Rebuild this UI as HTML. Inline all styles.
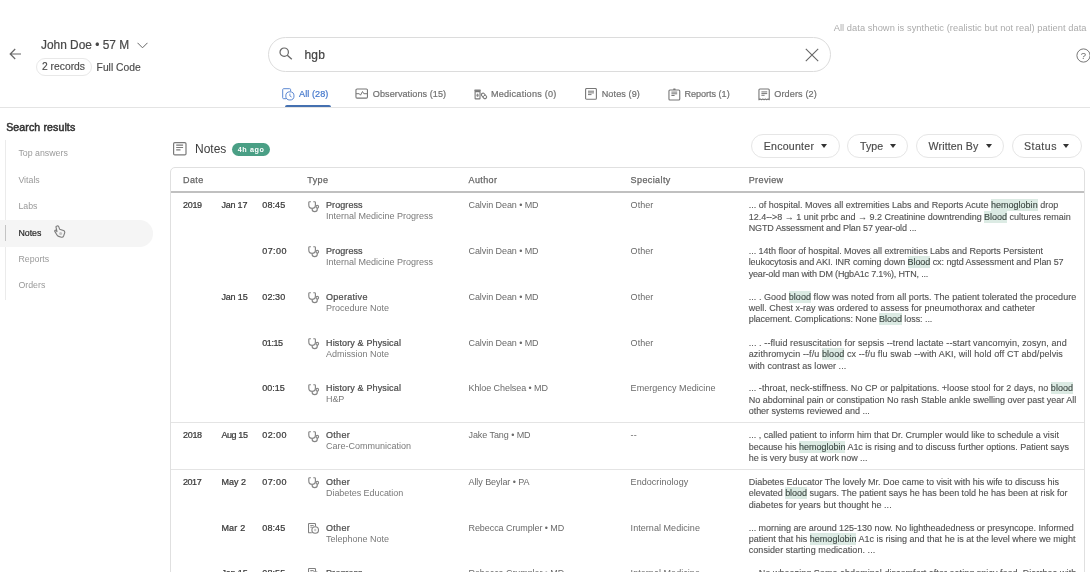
<!DOCTYPE html>
<html>
<head>
<meta charset="utf-8">
<title>Search results</title>
<style>
*{box-sizing:border-box;margin:0;padding:0}
html,body{width:1090px;height:572px;overflow:hidden;background:#fff}
body{font-family:"Liberation Sans",sans-serif;color:#444;position:relative;font-size:9px;will-change:transform}
.abs{position:absolute;white-space:nowrap}
svg{display:block}
/* header */
#pname{left:41px;top:37px;font-size:11.9px;line-height:16px;color:#484848;-webkit-text-stroke:.2px currentColor}
#rec{left:35.5px;top:58.3px;width:56px;height:18px;border:1px solid #e8e8e8;border-radius:9px;-webkit-text-stroke:.15px currentColor;font-size:10.3px;line-height:16.6px;text-align:center;color:#4a4a4a}
#fc{left:96.6px;top:59.6px;font-size:10.3px;line-height:16px;color:#4a4a4a;-webkit-text-stroke:.15px currentColor}
#search{left:268px;top:37px;width:563px;height:35px;border:1px solid #dcdcdc;border-radius:18px}
#q{left:304.5px;top:45.7px;font-size:12px;line-height:18px;color:#444;letter-spacing:.2px;-webkit-text-stroke:.2px currentColor}
#disc{letter-spacing:.05px;left:833.7px;top:22px;font-size:9.3px;line-height:12px;color:#ababab}
.tab{top:87.6px;height:12px;line-height:12px;font-size:9.1px;color:#707070;-webkit-text-stroke:.2px currentColor}
#hdiv{left:0;top:107px;width:1090px;height:1px;background:#e4e4e4}
#uline{left:284.7px;top:104.6px;width:46.2px;height:2.4px;background:#4470b0;border-radius:2px 2px 0 0}
/* sidebar */
#sr{letter-spacing:.1px;left:6.2px;top:120.3px;font-size:10.6px;line-height:14px;color:#333;-webkit-text-stroke:.5px currentColor}
#vline{left:5.1px;top:140px;width:1px;height:160px;background:#ebebeb}
#pill{left:0;top:220px;width:152.5px;height:26.5px;background:#f5f5f5;border-radius:0 13.25px 13.25px 0}
#vsel{left:5.1px;top:225px;width:1px;height:16px;background:#c4c4c4}
.sb{left:18.4px;font-size:8.8px;line-height:12px;color:#9a9a9a}
/* notes heading */
#nh{left:195px;top:140.5px;font-size:12px;line-height:16px;color:#3c3c3c}
#badge{left:231.6px;top:142.6px;width:38.5px;height:13px;border-radius:6.5px;background:#4a9f85;color:#fff;font-size:7.2px;line-height:13px;font-weight:bold;text-align:center;letter-spacing:.62px;padding-left:.5px}
.fb{top:134px;height:23.6px;border:1px solid #e6e6e6;border-radius:12px;font-size:10.6px;line-height:23.4px;color:#4a4a4a;-webkit-text-stroke:.15px currentColor}
.fb i{position:absolute;top:9.2px;width:0;height:0;border-left:3.5px solid transparent;border-right:3.5px solid transparent;border-top:4.2px solid #333}
/* table */
#tbl{left:170px;top:167.2px;width:914.6px;height:420px;border:1.2px solid #e0e0e0;border-radius:5px}
#thl{left:171px;top:191.1px;width:913px;height:1.6px;background:#c0c0c0}
.th{top:174px;font-size:9px;line-height:12px;color:#666;-webkit-text-stroke:.25px currentColor;letter-spacing:.4px}
.row{position:absolute;left:171px;width:913px;height:45.8px}
.row>div{position:absolute;white-space:nowrap;line-height:12px;font-size:9px}
.gb{position:absolute;left:171px;width:913px;height:1.3px;background:#e4e4e4}
.c1{left:12px;top:6px;color:#3a3a3a}
.c2{left:50.4px;top:6px;color:#3a3a3a}
.c3{left:91.3px;top:6px;color:#3a3a3a}
.row>.ci{position:absolute;left:136.7px;top:7.6px}
.m{-webkit-text-stroke:.24px currentColor}
.l{white-space:nowrap;height:11.3px}
.c4{left:155px;top:6px;color:#4e4e4e}
.c4b{left:155px;top:17.4px;color:#7a7a7a}
.c5{left:297.5px;top:6px;color:#6a6a6a}
.c6{left:459.6px;top:6px;color:#6a6a6a}
.row>.pv{left:577.7px;top:7.3px;color:#525252;line-height:11.3px;-webkit-text-stroke:.12px currentColor}
.pv b{font-weight:normal;background:#dcebe4;color:#3c4642;padding:1px 0}

#r1 .c3,#r3 .c3,#r8 .c3,#r9 .c3{letter-spacing:.1px}
#r2 .c3,#r6 .c3,#r7 .c3{letter-spacing:.4px}
#r4 .c3{letter-spacing:-.46px}
#r1 .c2{letter-spacing:-.2px}#r3 .c2,#r9 .c2{letter-spacing:-.15px}#r6 .c2{letter-spacing:-.4px}#r8 .c2{letter-spacing:.2px}
#r1 .c1,#r6 .c1{letter-spacing:-.3px}#r7 .c1{letter-spacing:-.45px}

.c5{letter-spacing:-.07px}.c6{letter-spacing:.05px}
#r1 .c4,#r2 .c4,#r9 .c4{letter-spacing:.08px}#r3 .c4{letter-spacing:.3px}#r4 .c4,#r5 .c4{letter-spacing:.14px}#r6 .c4,#r7 .c4,#r8 .c4{letter-spacing:.3px}
#r5 .c4b{letter-spacing:-.1px}#r7 .c4b{letter-spacing:-.05px}
</style>
</head>
<body>


<!-- header -->
<svg class="abs" style="left:8.5px;top:48px" width="13" height="12" viewBox="0 0 13 12"><path d="M12 6H1.6M6.2 1L1.2 6l5 5" fill="none" stroke="#666" stroke-width="1.2"/></svg>
<div class="abs" id="pname">John Doe • 57 M</div>
<svg class="abs" style="left:137px;top:41.5px" width="11" height="7" viewBox="0 0 11 7"><path d="M.5.8L5.5 5.8 10.5.8" fill="none" stroke="#666" stroke-width="1"/></svg>
<div class="abs" id="rec">2 records</div>
<div class="abs" id="fc">Full Code</div>

<div class="abs" id="search"></div>
<svg class="abs" style="left:279px;top:47.200px" width="14" height="13" viewBox="0 0 14 13"><circle cx="5.2" cy="5.2" r="4.2" fill="none" stroke="#666" stroke-width="1.2"/><path d="M8.3 8.3L12.8 12.3" stroke="#666" stroke-width="1.3"/></svg>
<div class="abs" id="q">hgb</div>
<svg class="abs" style="left:804.800px;top:47.800px" width="14" height="14" viewBox="0 0 14 14"><path d="M.8.8L13.2 13.2M13.2.8L.8 13.2" stroke="#666" stroke-width="1.1"/></svg>
<div class="abs" id="disc">All data shown is synthetic (realistic but not real) patient data</div>
<svg class="abs" style="left:1076px;top:47.600px" width="15" height="15" viewBox="0 0 15 15"><circle cx="7.500" cy="7.500" r="6.600" fill="none" stroke="#777" stroke-width="1"/><text x="7.500" y="10.900" font-size="9.500" font-family="Liberation Sans" text-anchor="middle" fill="#666">?</text></svg>

<!-- tabs -->
<svg class="abs" style="left:282px;top:88px" width="13" height="13" viewBox="0 0 13 13"><path d="M4 10.700H1.600a.9.9 0 0 1-.9-.9V1.600a.9.9 0 0 1 .9-.9h6.100a.9.9 0 0 1 .9.9V3.300" fill="none" stroke="#5c88d2" stroke-width="1"/><circle cx="7.900" cy="7.900" r="4.100" fill="none" stroke="#5c88d2" stroke-width="1"/><path d="M7.900 5.600V8l1.700 1" fill="none" stroke="#5c88d2" stroke-width=".9"/></svg>
<svg class="abs" style="left:355.300px;top:88.400px" width="14" height="11" viewBox="0 0 14 11"><rect x=".95" y="1" width="11.500" height="9.100" rx="1.100" fill="none" stroke="#777" stroke-width="1.100"/><path d="M1 5.700h3.300l1.200 1.500 2-3.700 1.300 2.200h3.600" fill="none" stroke="#777" stroke-width="1" stroke-linejoin="round"/></svg>
<svg class="abs" style="left:473.800px;top:88.500px" width="14" height="11" viewBox="0 0 14 11"><rect x=".3" y=".5" width="6.500" height="2.100" rx=".6" fill="#808080"/><rect x="1.100" y="2.600" width="4.900" height="7.300" rx=".5" fill="none" stroke="#777" stroke-width="1.100"/><ellipse cx="3.550" cy="6.200" rx="1.100" ry="1.800" fill="#8a8a8a"/><g transform="rotate(50 10 6.900)"><rect x="6.900" y="5.300" width="6.200" height="3.200" rx="1.600" fill="none" stroke="#777" stroke-width="1.050"/><path d="M10 5.300v3.200" stroke="#777" stroke-width=".9"/></g></svg>
<svg class="abs" style="left:585px;top:88px" width="12" height="12" viewBox="0 0 12 12"><rect x=".6" y=".5" width="10.800" height="10.800" rx="1.100" fill="none" stroke="#777" stroke-width="1.100"/><path d="M3 3.200h6M3 4.900h6M3 6.600h3.500" stroke="#777" stroke-width="1"/></svg>
<svg class="abs" style="left:667.500px;top:87.500px" width="13" height="13" viewBox="0 0 13 13"><rect x=".95" y="1.950" width="10.800" height="10.100" rx="1" fill="none" stroke="#777" stroke-width="1.100"/><rect x="5.100" y=".4" width="2.600" height="1.600" rx=".7" fill="#777"/><path d="M3.400 4.100h5.800M3.400 5.800h5.800M3.400 7.500h3.200" stroke="#777" stroke-width="1"/></svg>
<svg class="abs" style="left:757.500px;top:87.500px" width="12" height="13" viewBox="0 0 12 13"><path d="M.95 11.800V2a.95.95 0 0 1 .95-.95h8.400a.95.95 0 0 1 .95.95v9.800l-1.290-.7-1.290.7-1.290-.7-1.290.7-1.290-.7-1.290.7-1.290-.7z" fill="none" stroke="#777" stroke-width="1.100" stroke-linejoin="round"/><path d="M3.400 3.900h5.800M3.400 5.600h5.800M3.400 7.300h3.200" stroke="#777" stroke-width="1"/></svg>
<div class="abs tab" style="left:299px;color:#4377cc;letter-spacing:0.075px" id="t1">All (28)</div>
<div class="abs tab" style="left:372.8px;letter-spacing:0.065px" id="t2">Observations (15)</div>
<div class="abs tab" style="left:491px;letter-spacing:0.22px" id="t3">Medications (0)</div>
<div class="abs tab" style="left:601.7px;letter-spacing:0.1px" id="t4">Notes (9)</div>
<div class="abs tab" style="left:684.4px;letter-spacing:-0.02px" id="t5">Reports (1)</div>
<div class="abs tab" style="left:774.3px;letter-spacing:0.11px" id="t6">Orders (2)</div>
<div class="abs" id="hdiv"></div>
<div class="abs" id="uline"></div>

<!-- sidebar -->
<div class="abs" id="sr">Search results</div>
<div class="abs" id="vline"></div>
<div class="abs" id="pill"></div>
<div class="abs" id="vsel"></div>
<div class="abs sb" style="top:147px">Top answers</div>
<div class="abs sb" style="top:173.5px">Vitals</div>
<div class="abs sb" style="top:200px">Labs</div>
<div class="abs sb" style="top:226.6px;color:#2a2a2a;-webkit-text-stroke:.2px currentColor">Notes</div>
<div class="abs sb" style="top:253.3px">Reports</div>
<div class="abs sb" style="top:279.3px">Orders</div>

<svg class="abs" style="left:54px;top:224.500px" width="12" height="13" viewBox="0 0 12 13"><path d="M3 1C3.800.6 4.600 1 4.800 1.800L5.600 4.200 9.500 5.600C10.600 6 11 7 10.600 8.200L9.600 11C9.200 12 8.400 12.400 7.400 12.200L4.600 11.400C3.800 11.200 3.200 10.600 2.800 9.800L.8 6.400C.4 5.600 1.200 4.800 2 5.400L3 6.600 2 2.200C1.800 1.600 2.400 1.200 3 1Z" fill="#f3f3f3" stroke="#7c7c7c" stroke-width="1.100" stroke-linejoin="round"/><circle cx="6.600" cy="8.400" r="1.500" fill="#c2c2c2"/></svg>

<!-- notes heading -->
<svg class="abs" style="left:173px;top:141.500px" width="14" height="14" viewBox="0 0 14 14"><rect x=".6" y=".6" width="12.400" height="12.300" rx="1.200" fill="none" stroke="#7a7a7a" stroke-width="1.200"/><path d="M3.200 3.100h6.900M3.200 5.500h6.900M3.200 7.900h4.300" stroke="#7a7a7a" stroke-width="1.100"/></svg>
<div class="abs" id="nh">Notes</div>
<div class="abs" id="badge">4h ago</div>

<div class="abs fb" style="left:751.2px;width:88.7px;padding-left:11.6px;letter-spacing:.23px">Encounter<i style="left:68.6px"></i></div>
<div class="abs fb" style="left:847px;width:61.4px;padding-left:12px;letter-spacing:.05px">Type<i style="left:42.1px"></i></div>
<div class="abs fb" style="left:915.8px;width:88.7px;padding-left:11.8px;letter-spacing:.12px">Written By<i style="left:69.4px"></i></div>
<div class="abs fb" style="left:1012px;width:69.7px;padding-left:10.9px;letter-spacing:.5px">Status<i style="left:49.9px"></i></div>

<!-- table -->
<div class="abs" id="tbl"></div>
<div class="abs th" style="left:183px">Date</div>
<div class="abs th" style="left:307.3px">Type</div>
<div class="abs th" style="left:468.5px">Author</div>
<div class="abs th" style="left:630.6px">Specialty</div>
<div class="abs th" style="left:748.7px">Preview</div>
<div class="abs" id="thl"></div>

<div class="row" id="r1" style="top:193.0px">
<div class="c1 m">2019</div><div class="c2 m">Jan 17</div><div class="c3 m">08:45</div>
<svg class="ci" width="12" height="12" viewBox="0 0 12 12"><path d="M2.900.7H1.600a.8.8 0 0 0-.8.8v2.400a3.300 3.300 0 0 0 6.600 0V1.500a.8.8 0 0 0-.8-.8H5.300M4.100 7.200v.9a2.600 2.600 0 0 0 5.200 0V7" fill="none" stroke="#858585" stroke-width="1.150"/><circle cx="9.300" cy="5.700" r="1.300" fill="none" stroke="#858585" stroke-width="1.100"/></svg><div class="c4 m">Progress</div><div class="c4b">Internal Medicine Progress</div>
<div class="c5">Calvin Dean • MD</div><div class="c6">Other</div>
<div class="pv"><div class="l" style="letter-spacing:0.018px">... of hospital. Moves all extremities Labs and Reports Acute <b>hemoglobin</b> drop</div><div class="l" style="letter-spacing:-0.017px">12.4--&gt;8 → 1 unit prbc and → 9.2 Creatinine downtrending <b>Blood</b> cultures remain</div><div class="l" style="letter-spacing:-0.107px">NGTD Assessment and Plan 57 year-old ...</div></div>
</div>
<div class="row" id="r2" style="top:238.75px">
<div class="c3 m">07:00</div>
<svg class="ci" width="12" height="12" viewBox="0 0 12 12"><path d="M2.900.7H1.600a.8.8 0 0 0-.8.8v2.400a3.300 3.300 0 0 0 6.600 0V1.500a.8.8 0 0 0-.8-.8H5.300M4.100 7.200v.9a2.600 2.600 0 0 0 5.200 0V7" fill="none" stroke="#858585" stroke-width="1.150"/><circle cx="9.300" cy="5.700" r="1.300" fill="none" stroke="#858585" stroke-width="1.100"/></svg><div class="c4 m">Progress</div><div class="c4b">Internal Medicine Progress</div>
<div class="c5">Calvin Dean • MD</div><div class="c6">Other</div>
<div class="pv"><div class="l" style="letter-spacing:-0.023px">... 14th floor of hospital. Moves all extremities Labs and Reports Persistent</div><div class="l" style="letter-spacing:-0.071px">leukocytosis and AKI. INR coming down <b>Blood</b> cx: ngtd Assessment and Plan 57</div><div class="l" style="letter-spacing:-0.173px">year-old man with DM (HgbA1c 7.1%), HTN, ...</div></div>
</div>
<div class="row" id="r3" style="top:284.5px">
<div class="c2 m">Jan 15</div><div class="c3 m">02:30</div>
<svg class="ci" width="12" height="12" viewBox="0 0 12 12"><path d="M2.900.7H1.600a.8.8 0 0 0-.8.8v2.400a3.300 3.300 0 0 0 6.600 0V1.500a.8.8 0 0 0-.8-.8H5.300M4.100 7.200v.9a2.600 2.600 0 0 0 5.200 0V7" fill="none" stroke="#858585" stroke-width="1.150"/><circle cx="9.300" cy="5.700" r="1.300" fill="none" stroke="#858585" stroke-width="1.100"/></svg><div class="c4 m">Operative</div><div class="c4b">Procedure Note</div>
<div class="c5">Calvin Dean • MD</div><div class="c6">Other</div>
<div class="pv"><div class="l" style="letter-spacing:0.049px">... . Good <b>blood</b> flow was noted from all ports. The patient tolerated the procedure</div><div class="l" style="letter-spacing:0.026px">well. Chest x-ray was ordered to assess for pneumothorax and catheter</div><div class="l" style="letter-spacing:-0.054px">placement. Complications: None <b>Blood</b> loss: ...</div></div>
</div>
<div class="row" id="r4" style="top:330.8px">
<div class="c3 m">01:15</div>
<svg class="ci" width="12" height="12" viewBox="0 0 12 12"><path d="M2.900.7H1.600a.8.8 0 0 0-.8.8v2.400a3.300 3.300 0 0 0 6.600 0V1.500a.8.8 0 0 0-.8-.8H5.300M4.100 7.200v.9a2.600 2.600 0 0 0 5.200 0V7" fill="none" stroke="#858585" stroke-width="1.150"/><circle cx="9.300" cy="5.700" r="1.300" fill="none" stroke="#858585" stroke-width="1.100"/></svg><div class="c4 m">History &amp; Physical</div><div class="c4b">Admission Note</div>
<div class="c5">Calvin Dean • MD</div><div class="c6">Other</div>
<div class="pv"><div class="l" style="letter-spacing:0.101px">... . --fluid resuscitation for sepsis --trend lactate --start vancomyin, zosyn, and</div><div class="l" style="letter-spacing:0.091px">azithromycin --f/u <b>blood</b> cx --f/u flu swab --with AKI, will hold off CT abd/pelvis</div><div class="l" style="letter-spacing:0.038px">with contrast as lower ...</div></div>
</div>
<div class="row" id="r5" style="top:376.0px">
<div class="c3 m">00:15</div>
<svg class="ci" width="12" height="12" viewBox="0 0 12 12"><path d="M2.900.7H1.600a.8.8 0 0 0-.8.8v2.400a3.300 3.300 0 0 0 6.600 0V1.500a.8.8 0 0 0-.8-.8H5.300M4.100 7.200v.9a2.600 2.600 0 0 0 5.200 0V7" fill="none" stroke="#858585" stroke-width="1.150"/><circle cx="9.300" cy="5.700" r="1.300" fill="none" stroke="#858585" stroke-width="1.100"/></svg><div class="c4 m">History &amp; Physical</div><div class="c4b">H&amp;P</div>
<div class="c5">Khloe Chelsea • MD</div><div class="c6">Emergency Medicine</div>
<div class="pv"><div class="l" style="letter-spacing:0.045px">... -throat, neck-stiffness. No CP or palpitations. +loose stool for 2 days, no <b>blood</b></div><div class="l" style="letter-spacing:-0.007px">No abdominal pain or constipation No rash Stable ankle swelling over past year All</div><div class="l" style="letter-spacing:-0.030px">other systems reviewed and ...</div></div>
</div>
<div class="row" id="r6" style="top:423.0px">
<div class="c1 m">2018</div><div class="c2 m">Aug 15</div><div class="c3 m">02:00</div>
<svg class="ci" width="12" height="12" viewBox="0 0 12 12"><path d="M2.900.7H1.600a.8.8 0 0 0-.8.8v2.400a3.300 3.300 0 0 0 6.600 0V1.500a.8.8 0 0 0-.8-.8H5.300M4.100 7.200v.9a2.600 2.600 0 0 0 5.200 0V7" fill="none" stroke="#858585" stroke-width="1.150"/><circle cx="9.300" cy="5.700" r="1.300" fill="none" stroke="#858585" stroke-width="1.100"/></svg><div class="c4 m">Other</div><div class="c4b">Care-Communication</div>
<div class="c5">Jake Tang • MD</div><div class="c6">--</div>
<div class="pv"><div class="l" style="letter-spacing:0.007px">... , called patient to inform him that Dr. Crumpler would like to schedule a visit</div><div class="l" style="letter-spacing:-0.017px">because his <b>hemoglobin</b> A1c is rising and to discuss further options. Patient says</div><div class="l" style="letter-spacing:-0.058px">he is very busy at work now ...</div></div>
</div>
<div class="row" id="r7" style="top:469.75px">
<div class="c1 m">2017</div><div class="c2 m">May 2</div><div class="c3 m">07:00</div>
<svg class="ci" width="12" height="12" viewBox="0 0 12 12"><path d="M2.900.7H1.600a.8.8 0 0 0-.8.8v2.400a3.300 3.300 0 0 0 6.600 0V1.500a.8.8 0 0 0-.8-.8H5.300M4.100 7.200v.9a2.600 2.600 0 0 0 5.200 0V7" fill="none" stroke="#858585" stroke-width="1.150"/><circle cx="9.300" cy="5.700" r="1.300" fill="none" stroke="#858585" stroke-width="1.100"/></svg><div class="c4 m">Other</div><div class="c4b">Diabetes Education</div>
<div class="c5">Ally Beylar • PA</div><div class="c6">Endocrinology</div>
<div class="pv"><div class="l" style="letter-spacing:-0.016px">Diabetes Educator The lovely Mr. Doe came to visit with his wife to discuss his</div><div class="l" style="letter-spacing:-0.011px">elevated <b>blood</b> sugars. The patient says he has been told he has been at risk for</div><div class="l" style="letter-spacing:0.038px">diabetes for years but thought he ...</div></div>
</div>
<div class="row" id="r8" style="top:515.5px">
<div class="c2 m">Mar 2</div><div class="c3 m">08:45</div>
<svg class="ci" width="12" height="12" viewBox="0 0 12 12"><g transform="translate(-.5 -.9)"><path d="M4.300 10.700H1.800a.8.8 0 0 1-.8-.8V2.200a.8.8 0 0 1 .8-.8h5.400a.8.8 0 0 1 .8.8V4.300" fill="none" stroke="#808080" stroke-width="1.100"/><path d="M2.800 3.400h3.400M2.800 5.100h1.800" stroke="#808080" stroke-width=".9"/><circle cx="7.700" cy="7.900" r="3.300" fill="#fff" stroke="#808080" stroke-width="1.100"/><circle cx="7.700" cy="7.900" r="1.200" fill="#c8c8c8"/></g></svg><div class="c4 m">Other</div><div class="c4b">Telephone Note</div>
<div class="c5">Rebecca Crumpler • MD</div><div class="c6">Internal Medicine</div>
<div class="pv"><div class="l" style="letter-spacing:-0.027px">... morning are around 125-130 now. No lightheadedness or presyncope. Informed</div><div class="l" style="letter-spacing:0.006px">patient that his <b>hemoglobin</b> A1c is rising and that he is at the level where we might</div><div class="l" style="letter-spacing:0.061px">consider starting medication. ...</div></div>
</div>
<div class="row" id="r9" style="top:560.8px">
<div class="c2 m">Jan 15</div><div class="c3 m">08:55</div>
<svg class="ci" width="12" height="12" viewBox="0 0 12 12"><g transform="translate(-.5 -.9)"><path d="M4.300 10.700H1.800a.8.8 0 0 1-.8-.8V2.200a.8.8 0 0 1 .8-.8h5.400a.8.8 0 0 1 .8.8V4.300" fill="none" stroke="#808080" stroke-width="1.100"/><path d="M2.800 3.400h3.400M2.800 5.100h1.800" stroke="#808080" stroke-width=".9"/><circle cx="7.700" cy="7.900" r="3.300" fill="#fff" stroke="#808080" stroke-width="1.100"/><circle cx="7.700" cy="7.900" r="1.200" fill="#c8c8c8"/></g></svg><div class="c4 m">Progress</div><div class="c4b">Clinic Note</div>
<div class="c5">Rebecca Crumpler • MD</div><div class="c6">Internal Medicine</div>
<div class="pv"><div class="l" style="letter-spacing:0.036px">... No wheezing Some abdominal discomfort after eating spicy food. Diarrhea with</div><div class="l">chills</div></div>
</div>
<div class="gb" style="top:422px"></div>
<div class="gb" style="top:469.2px"></div>
</body>
</html>
